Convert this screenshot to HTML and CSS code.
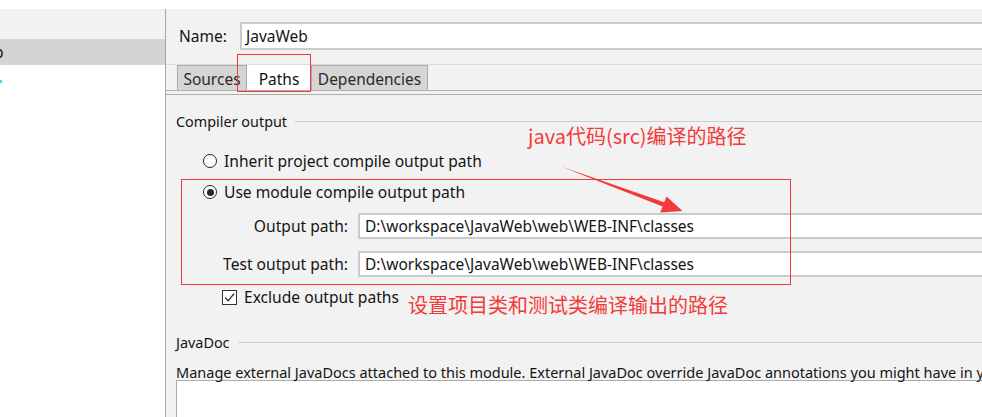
FILE: index.html
```html
<!DOCTYPE html>
<html lang="en">
<head>
<meta charset="utf-8">
<title>Module Paths</title>
<link rel="stylesheet" href="styles.css">
</head>
<body>
<div class="page">
  <div class="topstrip"></div>
  <div class="main">
    <aside class="sidebar">
      <div class="side-top"></div>
      <div class="side-row selected"><span class="clip">b</span></div>
      <div class="side-row"><span class="mark"></span></div>
    </aside>
    <section class="panel">
      <div class="name-row">
        <label class="name-label">Name:</label>
        <div class="field name-field">JavaWeb</div>
      </div>
      <div class="tabs">
        <div class="tab tab-sources">Sources</div>
        <div class="tab tab-paths active">Paths</div>
        <div class="tab tab-deps">Dependencies</div>
      </div>
      <div class="pane">
        <div class="section-title compiler"><span>Compiler output</span><i class="rule"></i></div>
        <div class="radio-row first"><span class="radio"></span><span>Inherit project compile output path</span></div>
        <div class="radio-row second"><span class="radio on"></span><span>Use module compile output path</span></div>
        <div class="path-grid">
          <label class="path-label">Output path:</label>
          <div class="field path-field">D:\workspace\JavaWeb\web\WEB-INF\classes</div>
          <label class="path-label">Test output path:</label>
          <div class="field path-field">D:\workspace\JavaWeb\web\WEB-INF\classes</div>
        </div>
        <div class="check-row">
          <span class="check"><svg width="13" height="13" viewBox="0 0 13 13"><path d="M2.2 6.6 L5.2 9.8 L11 2.6" fill="none" stroke="#222" stroke-width="1.3"/></svg></span>
          <span>Exclude output paths</span>
        </div>
        <div class="section-title javadoc"><span>JavaDoc</span><i class="rule"></i></div>
        <p class="manage">Manage external JavaDocs attached to this module. External JavaDoc override JavaDoc annotations you might have in your module.</p>
        <div class="doc-box"></div>
      </div>
    </section>
  </div>
  <div class="annot">
    <div class="redbox box-tab"></div>
    <div class="redbox box-group"></div>
    <div class="note note-top">java代码(src)编译的路径</div>
    <div class="note note-bottom">设置项目类和测试类编译输出的路径</div>
    <svg class="arrow" width="982" height="417" viewBox="0 0 982 417">
      <polygon points="561,166.5 664.2,202.2 666.6,196.4 682.5,211 660.2,212.4 662.6,206.4" fill="#f23a3a"/>
    </svg>
  </div>
</div>
</body>
</html>
```
FILE: styles.css
```css
* { box-sizing: border-box; }
html, body { margin: 0; padding: 0; }
body {
  font-family: "Noto Sans", "Open Sans", sans-serif;
  color: #141414;
  background: #ffffff;
}
.page {
  position: relative;
  width: 982px;
  height: 417px;
  overflow: hidden;
}
.topstrip { height: 9px; background: #ffffff; }
.main {
  display: flex;
  height: 408px;
}
.sidebar {
  width: 166px;
  flex: none;
  background: #ffffff;
  border-right: 1px solid #a7a7a7;
}
.side-top { height: 30px; background: #f2f2f2; }
.side-row { height: 26px; display: flex; align-items: center; font-size: 15.5px; }
.side-row.selected { background: #d4d4d4; }
.clip { margin-left: -6px; color: #111; }
.mark { width: 2px; height: 3px; background: #4fd0f5; margin-top: 6px; }

.panel {
  flex: 1;
  background: #f2f2f2;
  overflow: hidden;
}
.name-row {
  display: flex;
  align-items: center;
  padding: 13px 0 0 13px;
  height: 41px;
}
.name-label { width: 61px; font-size: 15.5px; }
.field {
  background: #ffffff;
  border: 2px solid #cbcbcb;
  border-right: none;
  font-size: 15.5px;
  white-space: nowrap;
}
.name-field {
  flex: 1;
  height: 28px;
  line-height: 24px;
  padding-left: 4px;
}
.tabs {
  display: flex;
  margin-top: 14px;
  border-top: 1px solid #dcdcdc;
  height: 27px;
  border-bottom: 1px solid #b0b0b0;
  padding-left: 11px;
}
.tab {
  height: 25px;
  line-height: 26px;
  font-size: 15.5px;
  text-align: center;
  background: #d5d5d5;
  border: 1px solid #a9a9a9;
  border-bottom: none;
  color: #2a2a2a;
  white-space: nowrap;
}
.tab.active { background: #ffffff; border-color: #ffffff; color: #111; }
.tab-sources { width: 70px; }
.tab-paths { width: 64px; }
.tab-deps { width: 117px; }

.pane {
  margin-top: 3px;
  border-top: 1px solid #acacac;
  padding-left: 10px;
}
.section-title {
  display: flex;
  align-items: center;
  height: 20px;
  font-size: 14.4px;
}
.section-title .rule {
  flex: 1;
  height: 1px;
  background: #cbcbcb;
  margin-left: 8px;
}
.compiler { margin-top: 16px; }
.javadoc { margin-top: 25px; }
.radio-row {
  display: flex;
  align-items: center;
  height: 24px;
  padding-left: 27px;
  font-size: 15.6px;
}
.radio-row.first { margin-top: 18px; }
.radio-row.second { margin-top: 7px; }
.radio {
  width: 14px;
  height: 14px;
  border: 1.5px solid #262626;
  border-radius: 50%;
  background: #ffffff;
  margin-right: 7px;
  display: flex;
  align-items: center;
  justify-content: center;
}
.radio.on::after {
  content: "";
  width: 7px;
  height: 7px;
  border-radius: 50%;
  background: #262626;
}
.path-grid {
  display: grid;
  grid-template-columns: 172px 1fr;
  column-gap: 10px;
  row-gap: 12px;
  margin-top: 9px;
  margin-right: -20px;
}
.path-label {
  text-align: right;
  font-size: 15.6px;
  line-height: 26px;
  white-space: nowrap;
}
.path-field {
  height: 26px;
  line-height: 22px;
  padding-left: 5px;
}
.check-row {
  display: flex;
  align-items: center;
  height: 20px;
  margin-top: 10px;
  padding-left: 46px;
  font-size: 15.6px;
}
.check {
  width: 15px;
  height: 15px;
  border: 1px solid #333;
  background: #ffffff;
  margin-right: 7px;
  display: flex;
  align-items: center;
  justify-content: center;
}
.manage {
  margin: 12px 0 0 0;
  height: 16px;
  line-height: 16px;
  font-size: 14.5px;
  white-space: nowrap;
}
.doc-box {
  height: 60px;
  margin-right: -20px;
  background: #ffffff;
  border-top: 1px solid #ababab;
  border-left: 1px solid #ababab;
}

.annot {
  position: absolute;
  inset: 0;
  pointer-events: none;
}
.redbox {
  position: absolute;
  border: 1px solid #f03a3a;
}
.box-tab { left: 237px; top: 54px; width: 74px; height: 38px; }
.box-group { left: 181px; top: 179px; width: 610px; height: 106px; }
.note {
  position: absolute;
  font-family: "Noto Sans CJK SC", "Noto Sans", sans-serif;
  font-size: 20px;
  line-height: 26px;
  color: #f23a3a;
  white-space: nowrap;
}
.note-top { left: 528px; top: 123px; }
.note-bottom { left: 408px; top: 292px; }
.arrow { position: absolute; left: 0; top: 0; }
```
